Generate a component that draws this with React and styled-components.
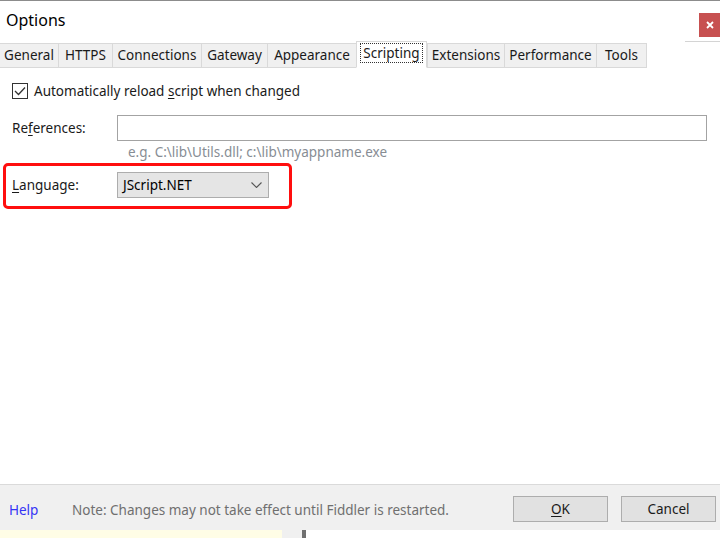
import styled, { createGlobalStyle } from 'styled-components';

const GlobalStyle = createGlobalStyle`
    html, body {
        margin: 0;
        padding: 0;
        background: #ffffff;
    }
    body {
        font-family: "Noto Sans", "Open Sans", "Liberation Sans", sans-serif;
        font-size: 13.5px;
        color: #1a1a1a;
    }
`;

const tabs = [
    { label: 'General', w: 58 },
    { label: 'HTTPS', w: 54 },
    { label: 'Connections', w: 89 },
    { label: 'Gateway', w: 66 },
    { label: 'Appearance', w: 89 },
    { label: 'Scripting', w: 71, active: true },
    { label: 'Extensions', w: 77 },
    { label: 'Performance', w: 92 },
    { label: 'Tools', w: 51, last: true },
];

const App = () => {
    return (
        <>
            <GlobalStyle />
            <Window>
                <TitleBar>
                    <Title>Options</Title>
                    <CloseButton aria-label="Close">
                        <svg width="8" height="8" viewBox="0 0 8 8">
                            <path d="M1 1 L7 7 M7 1 L1 7" stroke="#fff" strokeWidth="1.8" />
                        </svg>
                    </CloseButton>
                </TitleBar>

                <TabStrip>
                    {tabs.map(tab => (
                        <Tab key={tab.label} $w={tab.w} $active={tab.active} $last={tab.last}>
                            {tab.active ? <FocusRect>{tab.label}</FocusRect> : tab.label}
                        </Tab>
                    ))}
                    <TabFill />
                </TabStrip>

                <Content>
                    <CheckRow>
                        <CheckBox>
                            <svg width="12" height="10" viewBox="0 0 12 10">
                                <path d="M1 5 L4.5 8.5 L11 1.5" fill="none" stroke="#333" strokeWidth="1.3" />
                            </svg>
                        </CheckBox>
                        <span>Automatically reload <u>s</u>cript when changed</span>
                    </CheckRow>

                    <FieldRow $top={16}>
                        <Label>Re<u>f</u>erences:</Label>
                        <TextInput />
                    </FieldRow>
                    <Hint>e.g. C:\lib\Utils.dll; c:\lib\myappname.exe</Hint>

                    <Highlight>
                        <FieldRow $top={0}>
                            <Label><u>L</u>anguage:</Label>
                            <Select>
                                <span>JScript.NET</span>
                                <svg width="11" height="6" viewBox="0 0 11 6">
                                    <path d="M0.5 0.5 L5.5 5.5 L10.5 0.5" fill="none" stroke="#555" strokeWidth="1.1" />
                                </svg>
                            </Select>
                        </FieldRow>
                    </Highlight>
                </Content>

                <Footer>
                    <HelpLink>Help</HelpLink>
                    <Note>Note: Changes may not take effect until Fiddler is restarted.</Note>
                    <Buttons>
                        <Button><u>O</u>K</Button>
                        <Button>Cancel</Button>
                    </Buttons>
                </Footer>

                <BehindStrip>
                    <YellowPane />
                    <GrayGap />
                    <Splitter />
                    <WhitePane />
                </BehindStrip>
            </Window>
        </>
    );
}

const Window = styled.div`
    width: 720px;
    height: 538px;
    display: flex;
    flex-direction: column;
    overflow: hidden;
    border-top: 1px solid #8c8c8c;
    box-sizing: border-box;
`;

const TitleBar = styled.div`
    height: 39px;
    display: flex;
    align-items: center;
    justify-content: space-between;
    background: #ffffff;
`;

const Title = styled.div`
    font-size: 16px;
    padding-left: 6px;
    margin-top: -2px;
    color: #000;
`;

const CloseButton = styled.div`
    width: 21px;
    height: 24px;
    margin-top: 9px;
    background: #c75050;
    display: flex;
    align-items: center;
    justify-content: center;
`;

const TabStrip = styled.div`
    height: 28px;
    display: flex;
    align-items: flex-end;
    background: #ffffff;
`;

const Tab = styled.div`
    width: ${p => p.$w}px;
    flex-shrink: 0;
    height: ${p => (p.$active ? 27 : 25)}px;
    box-sizing: border-box;
    display: flex;
    align-items: center;
    justify-content: center;
    background: ${p => (p.$active ? '#ffffff' : '#f0f0f0')};
    border-top: 1px solid #d9d9d9;
    border-left: 1px solid #d9d9d9;
    border-right: ${p => (p.$active || p.$last ? '1px solid #d9d9d9' : 'none')};
    border-bottom: 1px solid ${p => (p.$active ? '#ffffff' : '#d9d9d9')};
    white-space: nowrap;
    color: #1a1a1a;
    padding-bottom: ${p => (p.$active ? '3px' : '1px')};
    &:first-child {
        border-left: none;
    }
`;

const FocusRect = styled.span`
    border: 1px dotted #333;
    padding: 0 2px;
    line-height: 18px;
`;

const TabFill = styled.div`
    flex: 1;
    height: 27px;
    position: relative;
    &::after {
        content: '';
        position: absolute;
        top: 0;
        left: 38px;
        right: 0;
        border-top: 1px solid #d4d4d4;
    }
`;

const Content = styled.div`
    flex: 1;
    background: #ffffff;
    padding: 15px 13px 0 12px;
    display: flex;
    flex-direction: column;
`;

const CheckRow = styled.div`
    display: flex;
    align-items: center;
    gap: 6px;
    height: 16px;
    u {
        text-underline-offset: 2px;
    }
`;

const CheckBox = styled.div`
    width: 16px;
    height: 16px;
    box-sizing: border-box;
    border: 1px solid #333;
    background: #fff;
    display: flex;
    align-items: center;
    justify-content: center;
`;

const FieldRow = styled.div`
    display: grid;
    grid-template-columns: 105px 1fr;
    align-items: center;
    margin-top: ${p => p.$top}px;
`;

const Label = styled.label`
    u {
        text-underline-offset: 2px;
    }
`;

const TextInput = styled.div`
    height: 26px;
    box-sizing: border-box;
    border: 1px solid #a3a3a3;
    background: #fff;
`;

const Hint = styled.div`
    color: #878d94;
    margin: 2px 0 0 116px;
    height: 18px;
    line-height: 18px;
`;

const Highlight = styled.div`
    width: 289px;
    height: 46px;
    box-sizing: border-box;
    margin: 2px 0 0 -9px;
    border: 3px solid #ff0e0e;
    border-radius: 5px;
    padding: 6px 0 0 6px;
`;

const Select = styled.div`
    width: 152px;
    height: 26px;
    box-sizing: border-box;
    border: 1px solid #adadad;
    background: #e5e5e5;
    display: flex;
    align-items: center;
    justify-content: space-between;
    padding: 0 6px 0 5px;
    color: #000;
`;

const Footer = styled.div`
    height: 46px;
    box-sizing: border-box;
    border-top: 1px solid #dadada;
    background: #f0f0f0;
    display: flex;
    align-items: center;
    padding: 4px 4px 0 9px;
`;

const HelpLink = styled.span`
    color: #3434f5;
    width: 63px;
`;

const Note = styled.span`
    color: #6f6f6f;
    flex: 1;
    white-space: nowrap;
`;

const Buttons = styled.div`
    display: flex;
    gap: 13px;
    margin-top: -2px;
`;

const Button = styled.div`
    width: 95px;
    height: 26px;
    box-sizing: border-box;
    border: 1px solid #adadad;
    background: #e1e1e1;
    display: flex;
    align-items: center;
    justify-content: center;
    color: #1a1a1a;
    u {
        text-underline-offset: 2px;
    }
`;

const BehindStrip = styled.div`
    height: 8px;
    display: flex;
    background: #ffffff;
`;

const YellowPane = styled.div`
    width: 282px;
    background: #fffde6;
`;

const GrayGap = styled.div`
    width: 20px;
    background: #f0f0f0;
`;

const Splitter = styled.div`
    width: 4px;
    background: #707070;
`;

const WhitePane = styled.div`
    flex: 1;
    background: #ffffff;
`;

export default App;
